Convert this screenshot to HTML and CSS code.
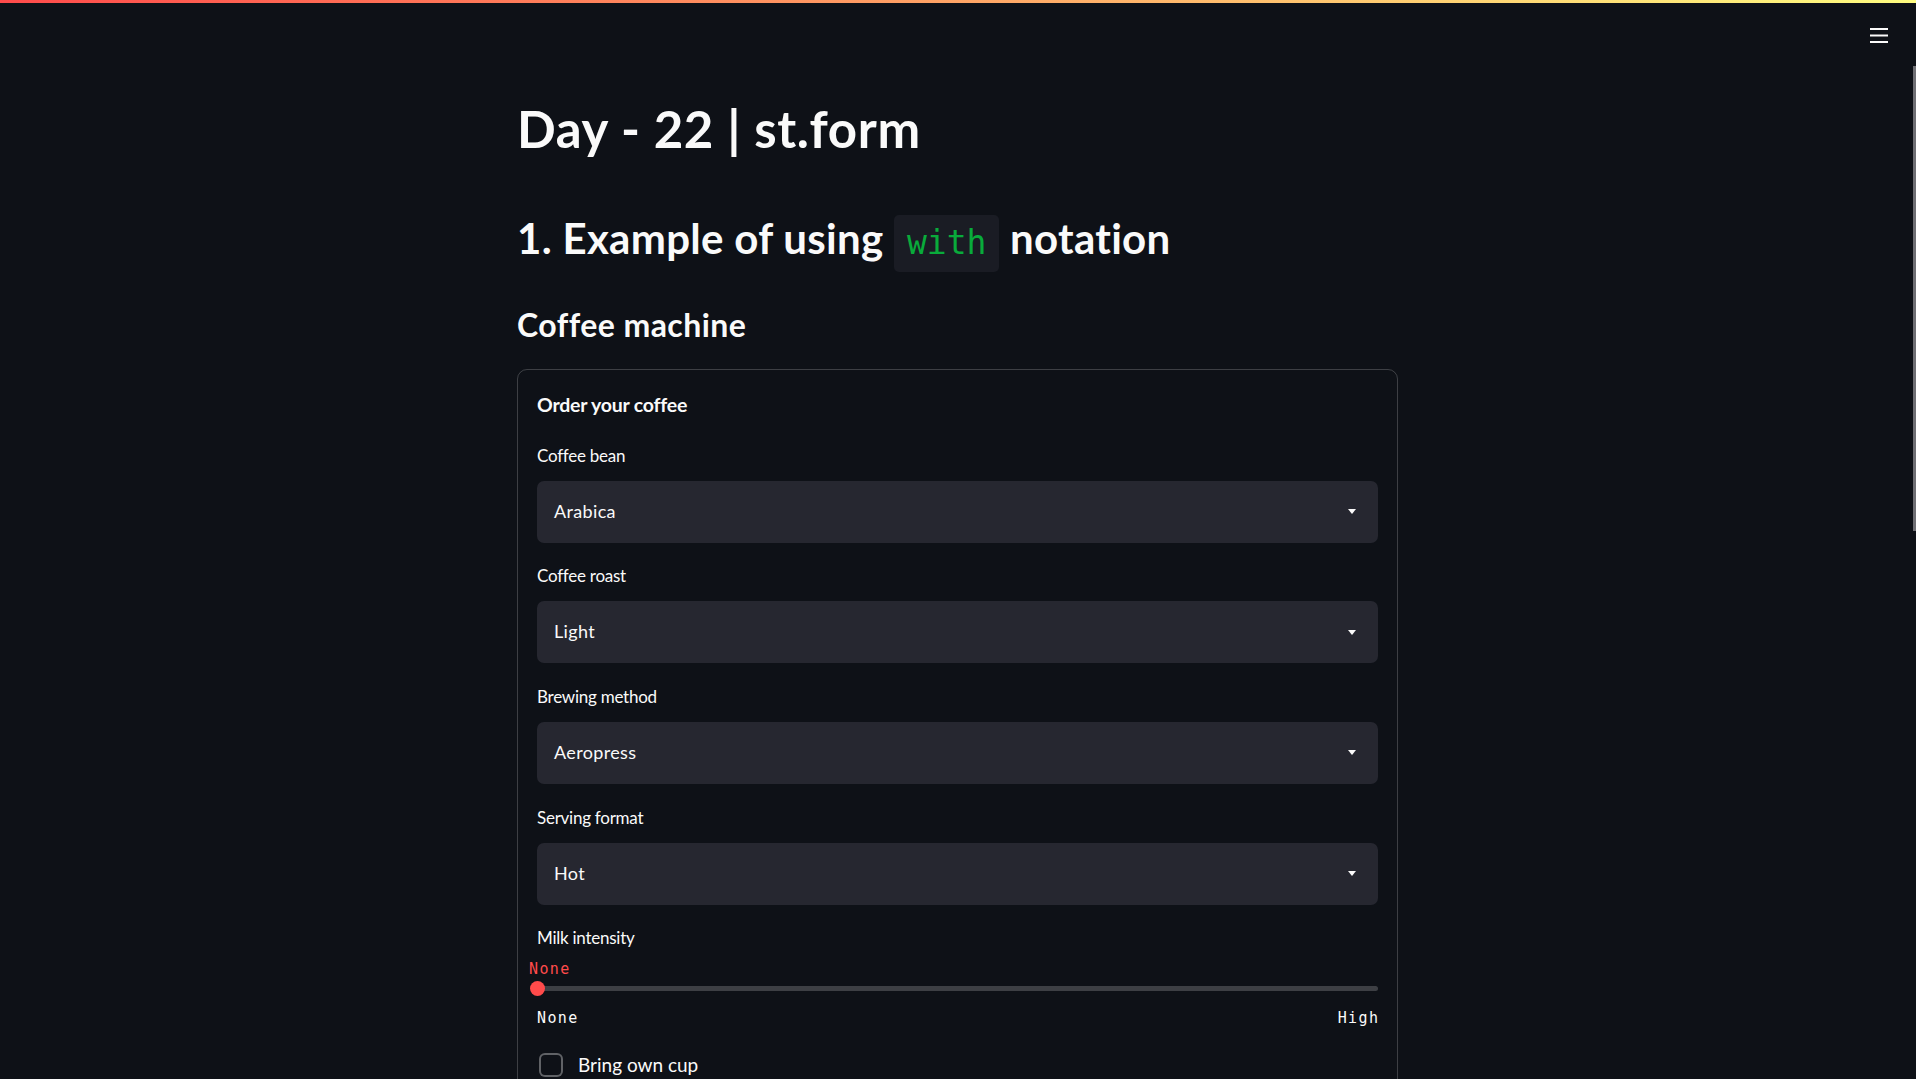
FILE: index.html
```html
<!DOCTYPE html>
<html lang="en">
<head>
<meta charset="utf-8">
<title>Day 22 | st.form</title>
<link rel="stylesheet" href="styles.css">
</head>
<body>
<div class="app">
  <header class="header">
    <div class="decoration"></div>
    <div class="toolbar">
      <button class="menu" aria-label="Main menu">
        <svg width="18" height="16" viewBox="0 0 18 16"><path d="M0 1h18M0 7.5h18M0 14h18" stroke="#fafafa" stroke-width="2"/></svg>
      </button>
    </div>
  </header>
  <main class="block">
    <h1 class="h1">Day - 22 | st.form</h1>
    <h2 class="h2">1. Example of using <code class="code">with</code> notation</h2>
    <h3 class="h3">Coffee machine</h3>
    <form class="form">
      <div class="form-title">Order your coffee</div>
      <div class="field">
        <label class="label">Coffee bean</label>
        <div class="select"><span class="select-value">Arabica</span><span class="caret"></span></div>
      </div>
      <div class="field">
        <label class="label">Coffee roast</label>
        <div class="select"><span class="select-value">Light</span><span class="caret"></span></div>
      </div>
      <div class="field">
        <label class="label">Brewing method</label>
        <div class="select"><span class="select-value">Aeropress</span><span class="caret"></span></div>
      </div>
      <div class="field">
        <label class="label">Serving format</label>
        <div class="select"><span class="select-value">Hot</span><span class="caret"></span></div>
      </div>
      <div class="slider-field">
        <label class="label">Milk intensity</label>
        <div class="slider-value">None</div>
        <div class="track"><span class="thumb"></span></div>
        <div class="ticks"><span>None</span><span>High</span></div>
      </div>
      <label class="checkbox-row"><span class="checkbox"></span><span class="checkbox-label">Bring own cup</span></label>
      <button class="submit" type="button">Submit</button>
    </form>
  </main>
  <div class="scroll-thumb"></div>
</div>
</body>
</html>
```
FILE: styles.css
```css
* { box-sizing: border-box; }
html, body { margin: 0; height: 100%; }
body {
  background: #0e1117;
  color: #fafafa;
  font-family: "Lato", "Noto Sans", sans-serif;
  overflow: hidden;
}
.app { height: 100vh; overflow: hidden; padding-right: 1px; }
.header { height: 63px; }
.decoration {
  height: 3px;
  margin-right: -1px;
  background: linear-gradient(90deg, #ff4b4b, #fffd80);
}
.toolbar { display: flex; justify-content: flex-end; padding: 25px 27px 0 0; }
.menu { background: none; border: 0; padding: 0; margin: 0; display: block; line-height: 0; }
.block { width: 881px; margin: 0 auto; }
.h1, .h2, .h3 { margin: 0; line-height: 1.2; font-weight: 700; color: #fafafa; }
.h1 { font-size: 51px; margin-top: 34.7px; letter-spacing: 0.65px; }
.h2 { font-size: 42px; margin-top: 54.6px; letter-spacing: 0.3px; }
.h3 { font-size: 32px; margin-top: 42px; letter-spacing: 0.45px; }
.code {
  font-family: "DejaVu Sans Mono", monospace;
  font-size: 33px;
  font-weight: 400;
  color: #09ab3b;
  background: #1a1c24;
  border-radius: 5px;
  padding: 8.4px 13px 9.2px;
  letter-spacing: 0;
}
.form {
  margin-top: 24.7px;
  border: 1px solid rgba(250, 250, 250, 0.2);
  border-radius: 10px;
  padding: 23px 19px 19px;
}
.form-title { font-size: 19.5px; font-weight: 700; line-height: 1.2; margin-bottom: 29.5px; letter-spacing: -0.2px; }
.field { margin-bottom: 23.87px; }
.label { display: block; font-size: 17px; line-height: 1.2; margin-bottom: 14.4px; letter-spacing: -0.25px; }
.select {
  height: 62px;
  background: #262730;
  border-radius: 7px;
  display: flex;
  align-items: center;
  justify-content: space-between;
  padding: 0 22px 0 17px;
}
.select-value { font-size: 18px; line-height: 1.2; letter-spacing: 0.35px; }
.caret {
  width: 0; height: 0;
  border-left: 4.5px solid transparent;
  border-right: 4.5px solid transparent;
  border-top: 5px solid #fafafa;
}
.slider-field .label { margin-bottom: 11.5px; }
.slider-value {
  font-family: "DejaVu Sans Mono", monospace;
  font-size: 15px;
  letter-spacing: 1.4px;
  line-height: 1.2;
  color: #ff4b4b;
  margin-left: -8px;
  margin-bottom: 8.2px;
}
.track {
  position: relative;
  height: 5px;
  border-radius: 3px;
  background: rgba(250, 250, 250, 0.2);
}
.thumb {
  position: absolute;
  left: -7.5px;
  top: -5px;
  width: 15px;
  height: 15px;
  border-radius: 50%;
  background: #ff4b4b;
}
.ticks {
  display: flex;
  justify-content: space-between;
  margin-top: 17.8px;
  font-family: "DejaVu Sans Mono", monospace;
  font-size: 15px;
  letter-spacing: 1.4px;
  line-height: 1.2;
  color: #fafafa;
}
.ticks span:last-child { margin-right: -1.4px; }
.checkbox-row { display: flex; align-items: center; gap: 15px; margin-top: 26.2px; padding-left: 2px; }
.checkbox {
  width: 24px; height: 24px;
  border: 2px solid rgba(250, 250, 250, 0.35);
  border-radius: 6px;
  background: #0e1117;
}
.checkbox-label { font-size: 19px; line-height: 1.2; }
.submit {
  margin-top: 24px;
  font-family: inherit;
  font-size: 19px;
  color: #fafafa;
  background: #0e1117;
  border: 1px solid rgba(250, 250, 250, 0.2);
  border-radius: 7px;
  padding: 8px 15px;
}
.scroll-thumb {
  position: fixed;
  right: 0;
  top: 66px;
  width: 3px;
  height: 465px;
  background: #6f6f74;
}
```
